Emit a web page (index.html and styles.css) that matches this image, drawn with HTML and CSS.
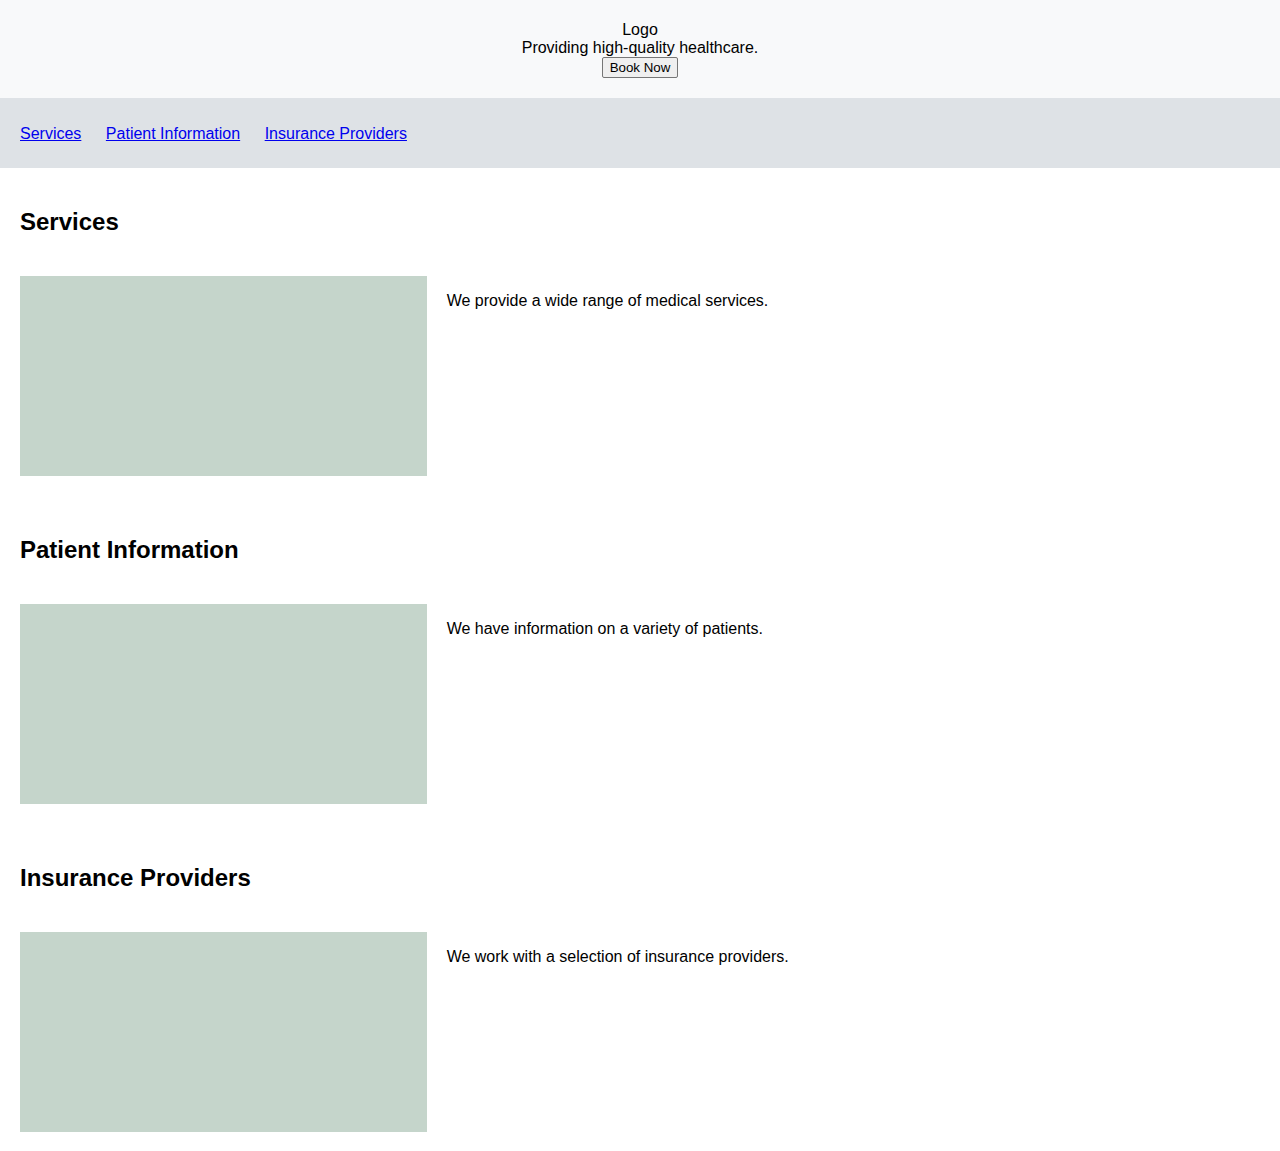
FILE: index.html
```html
<!DOCTYPE html>
<html lang="en">
<head>
<meta charset="utf-8">
<title>Healthcare</title>
<link rel="stylesheet" href="styles.css">
</head>
<body>
<header class="site-header">
  <div class="logo">Logo</div>
  <div class="tagline">Providing high-quality healthcare.</div>
  <button class="book-btn" type="button">Book Now</button>
</header>
<nav class="site-nav">
  <ul class="nav-list">
    <li><a href="#services">Services</a></li>
    <li><a href="#patients">Patient Information</a></li>
    <li><a href="#insurance">Insurance Providers</a></li>
  </ul>
</nav>
<main class="content">
  <section class="section" id="services">
    <h2 class="section-title">Services</h2>
    <div class="section-grid">
      <div class="placeholder"></div>
      <p class="section-text">We provide a wide range of medical services.</p>
    </div>
  </section>
  <section class="section" id="patients">
    <h2 class="section-title">Patient Information</h2>
    <div class="section-grid">
      <div class="placeholder"></div>
      <p class="section-text">We have information on a variety of patients.</p>
    </div>
  </section>
  <section class="section" id="insurance">
    <h2 class="section-title">Insurance Providers</h2>
    <div class="section-grid">
      <div class="placeholder"></div>
      <p class="section-text">We work with a selection of insurance providers.</p>
    </div>
  </section>
</main>
</body>
</html>
```
FILE: styles.css
```css
html, body {
  margin: 0;
  padding: 0;
}
body {
  font-family: "Liberation Sans", Arial, sans-serif;
  font-size: 16px;
  color: #000;
  background: #fff;
}
.site-header {
  background: #f8f9fa;
  padding: 21px 20px 20px;
  display: flex;
  flex-direction: column;
  align-items: center;
  text-align: center;
}
.book-btn {
  font-family: "Liberation Sans", Arial, sans-serif;
  font-size: 13.333px;
  line-height: 15px;
  padding: 2px 7px;
  border: 1px solid #767676;
  border-radius: 2px;
  background: #efefef;
  color: #000;
}
.site-nav {
  background: #dee2e6;
  padding: 11px 20px 9px;
}
.nav-list {
  list-style: none;
  margin: 16px 0;
  padding: 0;
  display: flex;
  gap: 24.5px;
}
.nav-list a {
  color: #0000ee;
  text-decoration: underline;
}
.section {
  padding: 20px;
}
.section-title {
  font-size: 24px;
  font-weight: bold;
  margin: 20px 0 40px;
}
.section-grid {
  display: grid;
  grid-template-columns: 1fr 2fr;
  gap: 20px;
}
.placeholder {
  height: 200px;
  background: #c5d5cb;
}
.section-text {
  margin: 16px 0;
}
```
